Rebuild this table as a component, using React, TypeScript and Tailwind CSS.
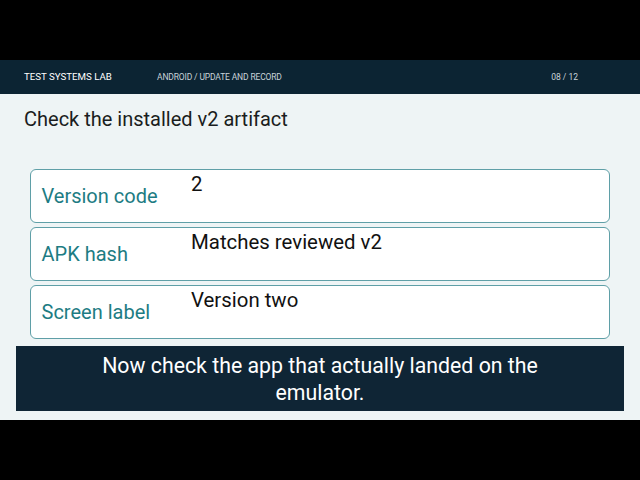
import React from "react";

const rows = [
  { label: "Version code", value: "2" },
  { label: "APK hash", value: "Matches reviewed v2" },
  { label: "Screen label", value: "Version two" },
];

export default function App() {
  return (
    <div className="w-[640px] h-[480px] bg-black flex flex-col" style={{ fontFamily: "Roboto, 'Liberation Sans', sans-serif" }}>
      <div className="h-[60px] shrink-0" />
      <div className="h-[34px] shrink-0 bg-[#0c2433] flex items-center px-[24px]">
        <span className="w-[133px] text-white text-[9.7px]">TEST SYSTEMS LAB</span>
        <span className="flex-1 text-[#c9d3d9] text-[8.5px] tracking-[-0.15px]">ANDROID / UPDATE AND RECORD</span>
        <span className="text-[#c9d3d9] text-[8.5px] mr-[38px]">08 / 12</span>
      </div>
      <div className="relative flex-1 bg-[#eef4f5] flex flex-col">
        <h1 className="pl-[24px] pt-[11px] text-[20px] leading-[28px] text-[#1a1d20]">Check the installed v2 artifact</h1>
        <div className="mt-[36px] px-[30px] flex flex-col gap-[4px]">
          {rows.map((r) => (
            <div key={r.label} className="h-[54px] bg-white rounded-[6px] border-[1.5px] border-[#5f9fa7] flex">
              <div className="w-[160px] pl-[10.5px] flex items-center pb-[1px] text-[20px] text-[#1d7c83]">{r.label}</div>
              <div className="pt-[2px] text-[20.4px] leading-[24px] text-[#111]">{r.value}</div>
            </div>
          ))}
        </div>
        <div className="absolute left-[16px] right-[16px] bottom-[9px] h-[65px] bg-[#0f2535] flex items-center justify-center">
          <p className="text-white text-[21.3px] leading-[27px] text-center w-[480px]">Now check the app that actually landed on the emulator.</p>
        </div>
      </div>
      <div className="h-[60px] shrink-0" />
    </div>
  );
}
